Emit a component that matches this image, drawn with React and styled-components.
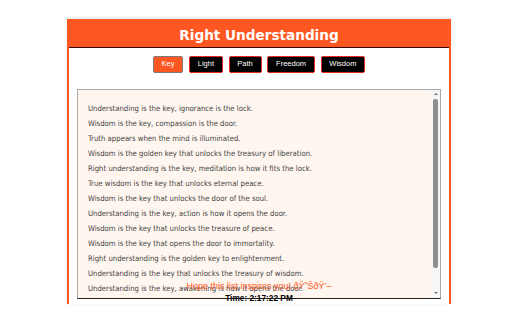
import React from 'react';
import styled, { createGlobalStyle } from 'styled-components';

const Global = createGlobalStyle`
  html, body { margin: 0; padding: 0; background: #fff; }
  body {
    width: 512px;
    height: 320px;
    overflow: hidden;
    font-family: "Liberation Sans", Arial, sans-serif;
  }
`;

const Card = styled.div`
  box-sizing: border-box;
  width: 384px;
  margin: 19.3px 0 0 67px;
  border-left: 2px solid #ff5722;
  border-right: 2px solid #ff5722;
  box-shadow: 0 -1px 4px rgba(0, 0, 0, 0.12);
  padding-bottom: 1px;
  display: flex;
  flex-direction: column;
`;

const Header = styled.header`
  box-sizing: border-box;
  height: 29px;
  background: #ff5722;
  border-bottom: 1px solid #3a0800;
  padding-top: 7.4px;
  text-align: center;
`;

const Title = styled.h1`
  margin: 0;
  font-family: "DejaVu Sans", Verdana, sans-serif;
  font-weight: bold;
  font-size: 13.6px;
  line-height: normal;
  color: #fff;
`;

const ButtonRow = styled.nav`
  display: flex;
  justify-content: center;
  gap: 5.7px;
  margin-top: 7.4px;
`;

const TabButton = styled.button`
  font-family: "Liberation Sans", Arial, sans-serif;
  font-size: 7.5px;
  line-height: 8.6px;
  color: #fff;
  background: ${(p) => (p.$active ? '#ff5722' : '#000')};
  border: 1.2px solid ${(p) => (p.$active ? '#7a7a7a' : '#e8281c')};
  border-radius: 2px;
  padding: 3.3px 7.8px;
  margin: 0;
  cursor: pointer;
`;

const ListBox = styled.div`
  box-sizing: border-box;
  margin: 15.7px 8px 0;
  height: 210px;
  border: 1px solid #a8a8a8;
  border-bottom-color: #222;
  background: #fff6ef;
  display: flex;
  overflow: hidden;
`;

const Viewport = styled.div`
  flex: 1;
  min-width: 0;
  overflow: hidden;
  padding: 11.5px 10px;
`;

const QuoteList = styled.ul`
  list-style: none;
  margin: 0;
  padding: 0;
`;

const Quote = styled.li`
  font-family: "DejaVu Sans Condensed", "DejaVu Sans", Verdana, sans-serif;
  font-size: 7.7px;
  line-height: 15px;
  color: #444;
  white-space: nowrap;
`;

const ScrollBar = styled.div`
  width: 9px;
  flex: none;
  background: #f6f6f6;
  display: flex;
  flex-direction: column;
`;

const Arrow = styled.div`
  height: 9px;
  flex: none;
  display: flex;
  align-items: center;
  justify-content: center;

  &::before {
    content: '';
    width: 0;
    height: 0;
    border-left: 2.5px solid transparent;
    border-right: 2.5px solid transparent;
    ${(p) =>
      p.$down
        ? 'border-top: 2.6px solid #6e6e6e;'
        : 'border-bottom: 2.6px solid #6e6e6e;'}
  }
`;

const Track = styled.div`
  flex: 1;
  display: flex;
  flex-direction: column;
`;

const Thumb = styled.div`
  margin: 0 1.8px;
  background: #8e8e8e;
  border-radius: 2px;
`;

const Footer = styled.footer`
  position: relative;
  margin-top: -17.6px;
  display: flex;
  flex-direction: column;
  align-items: center;
  gap: 3.2px;
`;

const Wish = styled.p`
  margin: 0;
  font-size: 9px;
  line-height: 10px;
  color: #ff5722;
`;

const Clock = styled.p`
  margin: 0;
  font-size: 8.3px;
  font-weight: bold;
  line-height: 9px;
  color: #000;
`;

const tabs = ['Key', 'Light', 'Path', 'Freedom', 'Wisdom'];

const quotes = [
  'Understanding is the key, ignorance is the lock.',
  'Wisdom is the key, compassion is the door.',
  'Truth appears when the mind is illuminated.',
  'Wisdom is the golden key that unlocks the treasury of liberation.',
  'Right understanding is the key, meditation is how it fits the lock.',
  'True wisdom is the key that unlocks eternal peace.',
  'Wisdom is the key that unlocks the door of the soul.',
  'Understanding is the key, action is how it opens the door.',
  'Wisdom is the key that unlocks the treasure of peace.',
  'Wisdom is the key that opens the door to immortality.',
  'Right understanding is the golden key to enlightenment.',
  'Understanding is the key that unlocks the treasury of wisdom.',
  'Understanding is the key, awakening is how it opens the door.',
  'Wisdom is the key that unlocks the gate of truth.',
];

const VIEW_HEIGHT = 208;
const CONTENT_HEIGHT = 23 + quotes.length * 15;
const thumbShare = Math.min(1, VIEW_HEIGHT / CONTENT_HEIGHT);

export default function App() {
  return (
    <>
      <Global />
      <Card>
        <Header>
          <Title>Right Understanding</Title>
        </Header>
        <ButtonRow>
          {tabs.map((t) => (
            <TabButton key={t} $active={t === 'Key'}>
              {t}
            </TabButton>
          ))}
        </ButtonRow>
        <ListBox>
          <Viewport>
            <QuoteList>
              {quotes.map((q) => (
                <Quote key={q}>{q}</Quote>
              ))}
            </QuoteList>
          </Viewport>
          <ScrollBar aria-hidden="true">
            <Arrow />
            <Track>
              <Thumb style={{ height: `${thumbShare * 100}%` }} />
            </Track>
            <Arrow $down />
          </ScrollBar>
        </ListBox>
        <Footer>
          <Wish>Hope this list inspires you! ðŸ˜ŠðŸ’–</Wish>
          <Clock>Time: 2:17:22 PM</Clock>
        </Footer>
      </Card>
    </>
  );
}
